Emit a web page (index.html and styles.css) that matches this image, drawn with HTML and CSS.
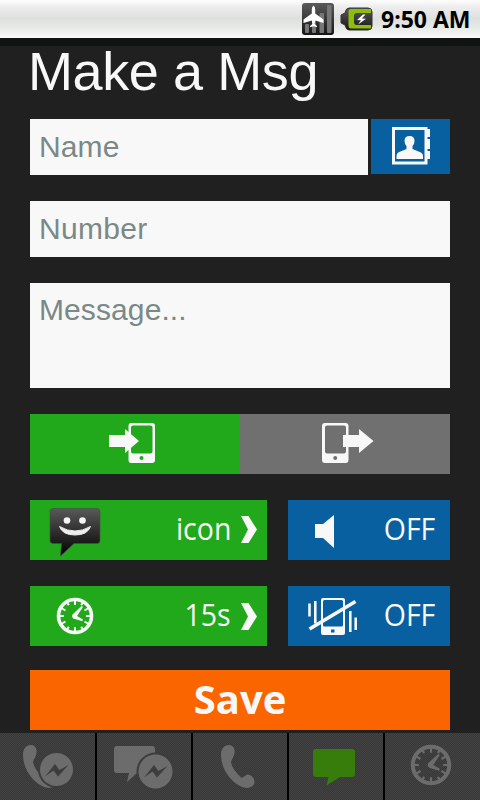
FILE: index.html
```html
<!DOCTYPE html>
<html lang="en">
<head>
<meta charset="utf-8">
<title>Make a Msg</title>
<link rel="stylesheet" href="styles.css">
</head>
<body>
<header class="status">
  <svg class="signal" width="32" height="32" viewBox="0 0 32 32">
    <defs><linearGradient id="dark" x2="0" y2="1"><stop stop-color="#5a5a5a"/><stop offset="1" stop-color="#161616"/></linearGradient></defs>
    <rect width="32" height="32" rx="3" fill="url(#dark)"/>
    <g fill="#777"><rect x="3" y="21" width="4" height="9" rx="1"/><rect x="10" y="16" width="4" height="14" rx="1"/><rect x="17.500" y="10" width="4.500" height="20" rx="1"/><rect x="25" y="2" width="4.500" height="28" rx="1"/></g>
    <path d="M11.500 2.500q1.600 1 1.700 4v4l8.300 6v3.500l-8.300-2.500-.6 3.500 2.400 2v1.200l-3.500-1-3.500 1v-1.200l2.400-2-.6-3.500L1.500 20v-3.500l8.300-6v-4q.1-3 1.700-4z" fill="#fff"/>
  </svg>
  <svg class="battery" width="33" height="24" viewBox="0 0 33 24">
    <path d="M1 8l4-2q1-5 4-5h19q4 0 4 4v14q0 4-4 4H9q-3 0-4-5l-4-2z" fill="url(#dark)" stroke="#333"/>
    <path d="M11 2h20v4H17q-3 0-3 3v6q0 3 3 3h14v3.500H11q-2.500 0-2.500-3v-13.500q0-3 2.500-3z" fill="#8fbd0d"/>
    <path d="M23 7.500l-6 5.500 4 .2-3 4.300 8-5.700-4.200-.2 3.700-4.100z" fill="#fff"/>
  </svg>
  <span class="time">9:50 AM</span>
</header>
<main>
  <h1>Make a Msg</h1>
  <div class="name-row">
    <input class="field" placeholder="Name">
    <button class="contacts blue">
      <svg width="40" height="40" viewBox="0 0 40 40">
        <path d="M2.500 2.500h32.500v34.500h-32.500z" fill="none" stroke="#f8f8f8" stroke-width="3"/>
        <path d="M36 3h3v8h-3zm0 10h3v10h-3zm0 12h3v8h-3z" fill="#f8f8f8"/>
        <path d="M5.500 33v-3q0-3.500 4-4.500l6-2.500v-3q-2-2-2-5 0-5 5-5t5 5q0 3-2 5v3l6 2.500q4.500 1 4.500 4.500v3z" fill="#f8f8f8"/>
      </svg>
    </button>
  </div>
  <input class="field number" placeholder="Number">
  <textarea class="field message" placeholder="Message..."></textarea>
  <div class="direction">
    <button class="green">
      <svg class="incoming" width="46" height="40" viewBox="0 0 46 40">
        <path fill-rule="evenodd" d="M22 0h21q3 0 3 3v34q0 3-3 3H22q-2.500 0-2.500-3V3q0-3 2.500-3zM24 2.500q-2 0-2 2v24q0 2 2 2h17.500q2 0 2-2v-24q0-2-2-2zM32.500 33a2 2 0 1 0 0 4 2 2 0 0 0 0-4z" fill="#f8f8f8"/>
        <path d="M0 12h16V6l14 12-14 12v-6H0z" fill="#f8f8f8"/>
      </svg>
    </button>
    <button class="gray">
      <svg class="outgoing" width="52" height="40" viewBox="0 0 52 40">
        <path fill-rule="evenodd" d="M3 0h20.500q3 0 3 3v34q0 3-3 3H3q-3 0-3-3V3q0-3 3-3zM5 2.500q-2 0-2 2v24q0 2 2 2h17q2 0 2-2v-24q0-2-2-2zM13.200 33a2 2 0 1 0 0 4 2 2 0 0 0 0-4z" fill="#f8f8f8"/>
        <path d="M21 12h16V6l14.500 12L37 30v-6H21z" fill="#f8f8f8"/>
      </svg>
    </button>
  </div>
  <div class="options">
    <button class="option green">
      <svg class="smile" width="54" height="52" viewBox="0 0 54 52">
        <defs><linearGradient id="bubble" x2="0" y2="1"><stop stop-color="#595959"/><stop offset=".65" stop-color="#202020"/><stop offset="1"/></linearGradient></defs>
        <path d="M5 1.500h44q3 0 3 3v29q0 3-3 3H26L12.500 49l1-12.500H5q-3 0-3-3v-29q0-3 3-3z" fill="url(#bubble)" stroke="#475047" stroke-opacity=".7"/>
        <circle cx="19" cy="13.500" r="3.300" fill="#f5f5f5"/><circle cx="34.500" cy="13.500" r="3.300" fill="#f5f5f5"/>
        <path d="M11.500 19.500q15.500 9 31 0-3 8.500-15.500 8.500t-15.500-8.500z" fill="#eee" stroke="#eee" stroke-linejoin="round"/>
      </svg>
      <span class="value">icon</span>
      <svg class="chevron raised" width="18" height="27" viewBox="0 0 18 27"><path d="M0 0h7.500l8.500 13.500L7.500 27H0l7-13.500z" fill="#f8f8f8"/></svg>
    </button>
    <button class="option blue">
      <svg class="speaker" width="19" height="33" viewBox="0 0 19 33"><path d="M0 9h8L19 0v33L8 23H0z" fill="#f8f8f8"/></svg>
      <span class="value">OFF</span>
    </button>
    <button class="option green">
      <svg class="clock" width="38" height="38" viewBox="0 0 38 38">
        <g id="dial" fill="none" stroke="currentColor">
          <circle cx="19" cy="19" r="16.500" stroke-width="3.600"/>
          <path stroke-width="2" d="M19 3v5M19 30v5M3 19h5M30 19h5M5.200 11l4.300 2.500M28.500 24.500l4.300 2.500M5.200 27l4.300-2.500M28.500 13.500l4.300-2.500M11 5.200l1.800 3.100M27 5.200l-1.800 3.100M11 32.800l1.800-3.100M27 32.800l-1.800-3.100"/>
          <path fill="currentColor" stroke="none" d="M16.500 17.500L25.500 9l1.500 1-6 9 6 3.500-.7 1.700-7.300-2.200a3 3 0 0 1-2.500-4.500z"/>
        </g>
      </svg>
      <span class="value">15s</span>
      <svg class="chevron" width="18" height="27" viewBox="0 0 18 27"><path d="M0 0h7.500l8.500 13.500L7.500 27H0l7-13.500z" fill="#f8f8f8"/></svg>
    </button>
    <button class="option blue">
      <svg class="vibrate" width="50" height="38" viewBox="0 0 50 38">
        <path fill-rule="evenodd" d="M15 0h20q2 0 2 2v33q0 2-2 2H15q-2 0-2-2V2q0-2 2-2zM16.500 2q-1.500 0-1.500 1.500V27q0 1.500 1.500 1.500h17q1.500 0 1.500-1.500V3.500Q35 2 33.500 2zM23 31.500v3h3.500v-3z" fill="#f8f8f8"/>
        <path d="M1.500 5.500v13M7.300 3v22.500M42.300 13v21M47.700 19.500v12.500" stroke="#f8f8f8" stroke-width="2.600"/>
        <path d="M1.500 31L47.500 3.500" stroke="#f8f8f8" stroke-width="3.600"/>
      </svg>
      <span class="value">OFF</span>
    </button>
  </div>
  <button class="save">Save</button>
</main>
<nav class="tabs">
  <a class="tab">
    <svg class="t1" width="54" height="46" viewBox="0 0 54 46">
      <path id="handset" d="M9 1c4.500 0 6 4 5.500 8s-3 6-3.500 9q1 7 10.500 16 2.500-1.500 5.500-3.500c5 0 7.500 4 7.500 7.500 0 4-4 5.500-8 6C13 42 1 26 1 11 1 5 4 1 9 1z"/>
      <circle cx="34.500" cy="25.500" r="18.500" fill="#3d3d3d"/><circle cx="34.500" cy="25.500" r="16.500"/>
      <path id="bolt" d="M23 32.500l10-12.500 4.500 6 9-5-10.500 11.500-4.500-6z" fill="#3d3d3d"/>
    </svg>
  </a>
  <a class="tab">
    <svg class="t2" width="60" height="46" viewBox="0 0 60 46">
      <path d="M3 1h35q3 0 3 3v21q0 3-3 3H23L13 37l2-9H3q-3 0-3-3V4q0-3 3-3z"/>
      <circle cx="41.500" cy="26.500" r="19" fill="#3d3d3d"/><circle cx="41.500" cy="26.500" r="17"/><use href="#bolt" x="7"/>
    </svg>
  </a>
  <a class="tab"><svg class="t3" width="36" height="46" viewBox="0 0 36 46"><use href="#handset"/></svg></a>
  <a class="tab active"><svg class="t4" width="42" height="37" viewBox="0 0 42 37"><path d="M3 0h36q3 0 3 3v22q0 3-3 3H27L13.500 36.500l2-8.500H3q-3 0-3-3V3q0-3 3-3z"/></svg></a>
  <a class="tab"><svg class="t5" width="42" height="42" viewBox="0 0 38 38"><use href="#dial"/></svg></a>
</nav>
</body>
</html>
```

FILE: styles.css
```css
* { box-sizing: border-box; }
body {
  margin: 0;
  width: 480px;
  height: 800px;
  overflow: hidden;
  display: flex;
  flex-direction: column;
  background: #202020;
  color: #f8f8f8;
  font-family: "Open Sans", "Noto Sans", sans-serif;
}
svg { display: block; flex: none; }
button { border: 0; padding: 0; color: inherit; font: inherit; }

.status {
  height: 38px;
  flex: none;
  display: flex;
  align-items: flex-start;
  padding: 3px 0 0 302px;
  background: linear-gradient(#fdfdfd 0, #ececec 20%, #dee0de 48%, #e6e8e5 70%, #fafafa 100%);
}
.battery { margin: 4px 0 0 6px; }
.time {
  margin: 0 0 0 8px;
  font-size: 23px;
  line-height: 32px;
  font-weight: 700;
  color: #000;
  white-space: nowrap;
}

main {
  height: 695px;
  flex: none;
  padding: 0 30px;
  display: flex;
  flex-direction: column;
  border-top: 8px solid #111411;
}
h1 {
  margin: 0 0 18px -2px;
  height: 55px;
  font: 400 54px/50px "Liberation Sans", Arial, sans-serif;
  letter-spacing: -.4px;
}
.name-row { display: flex; gap: 3px; height: 56px; margin-bottom: 26px; }
.field {
  display: block;
  width: 100%;
  height: 56px;
  flex: none;
  margin: 0 0 26px;
  padding: 0 9px;
  border: 0;
  border-radius: 0;
  outline: 0;
  resize: none;
  background: #f8f8f8;
  font: 30px/36px "Liberation Sans", Arial, sans-serif;
  letter-spacing: .1px;
}
.number { letter-spacing: .3px; }
.name-row .field { width: 338px; margin: 0; }
.field::placeholder { color: #7b8986; opacity: 1; }
.message { height: 105px; padding-top: 9px; overflow: hidden; }
.contacts { width: 79px; height: 55px; padding-left: 20px; }
.contacts svg { margin-top: -1px; }

.green { background: #22a91b; }
.blue { background: #0960a1; }
.gray { background: #707070; }

.direction { display: grid; grid-template-columns: 1fr 1fr; height: 60px; flex: none; margin-bottom: 26px; }
.incoming { margin: -2px 0 0 79px; }
.outgoing { margin: -2px 0 0 82px; }

.options { display: grid; grid-template-columns: 237px 162px; gap: 26px 21px; flex: none; }
.option { height: 60px; display: flex; align-items: center; }
.value {
  margin: -2px 0 0 auto;
  font-size: 30px;
  line-height: 40px;
  transform: scale(.95, 1.04);
  transform-origin: right center;
}
.blue .value { margin-right: 15px; }
.chevron { margin: 0 8px 0 10px; }
.raised { margin-bottom: 1px; }
.smile { margin: 5px 0 0 18px; }
.speaker { margin: 2px 0 0 27px; }
.clock { margin-left: 26px; }
.vibrate { margin: 1px 0 0 20px; }

.save {
  height: 60px;
  flex: none;
  margin-top: 24px;
  padding-bottom: 2px;
  background: #fb6500;
  font-size: 40px;
  line-height: 56px;
  font-weight: 700;
}

.tabs {
  height: 67px;
  flex: none;
  display: grid;
  grid-template-columns: 97px 96px 96px 96px 95px;
  background: repeating-conic-gradient(#424242 0 25%, #383838 0 50%) 0 0 / 2px 2px;
}
.tab { border-right: 2px solid #000; fill: #6c6c6c; color: #6c6c6c; }
.tab:last-child { border: 0; }
.active { fill: #377d0b; }
.t1 { margin: 11px 0 0 22px; }
.t2 { margin: 12px 0 0 17px; }
.t3 { margin: 11px 0 0 27px; }
.t4 { margin: 16px 0 0 24px; }
.t5 { margin: 11px 0 0 25px; }
```
